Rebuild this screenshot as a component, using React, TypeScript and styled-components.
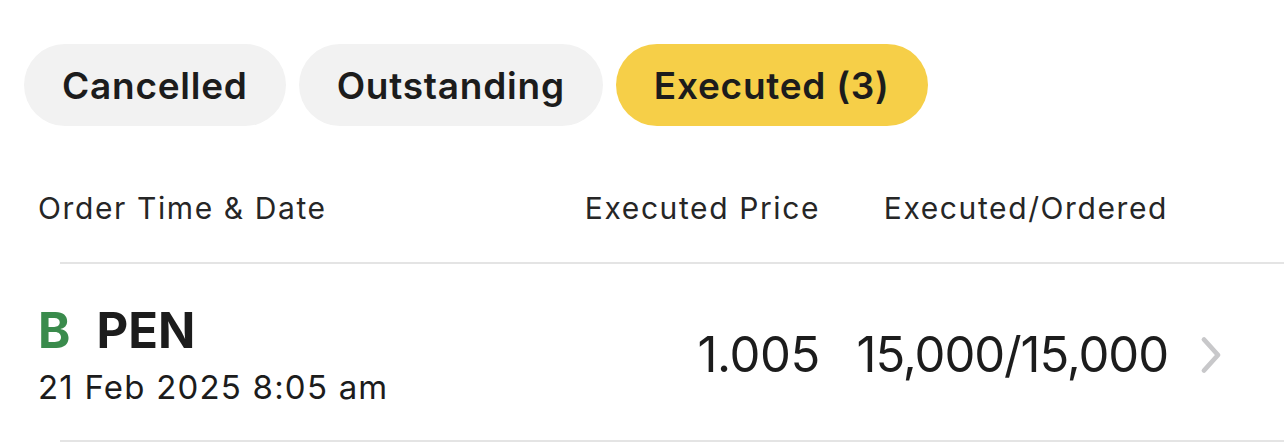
import React, { useState } from 'react';
import styled, { createGlobalStyle } from 'styled-components';

const GlobalStyle = createGlobalStyle`
  body {
    margin: 0;
    background: #ffffff;
    font-family: Inter, 'Noto Sans', sans-serif;
    color: #1c1c1c;
  }
`;

const orders = [
  {
    side: 'B',
    symbol: 'PEN',
    time: '21 Feb 2025 8:05 am',
    price: '1.005',
    filled: '15,000/15,000',
  },
];

const App = () => {
  const [tab, setTab] = useState('executed');

  return (
    <>
      <GlobalStyle />
      <Page>
        <Tabs>
          <Tab active={tab === 'cancelled'} onClick={() => setTab('cancelled')}>
            Cancelled
          </Tab>
          <Tab active={tab === 'outstanding'} onClick={() => setTab('outstanding')}>
            Outstanding
          </Tab>
          <Tab active={tab === 'executed'} onClick={() => setTab('executed')}>
            Executed (3)
          </Tab>
        </Tabs>

        <HeaderRow>
          <HeadLabel grow>Order Time &amp; Date</HeadLabel>
          <PriceCol>
            <HeadLabel>Executed Price</HeadLabel>
          </PriceCol>
          <QtyCol>
            <HeadLabel>Executed/Ordered</HeadLabel>
          </QtyCol>
          <ArrowCol />
        </HeaderRow>
        <Divider />

        {orders.map((order) => (
          <React.Fragment key={order.symbol + order.time}>
            <OrderRow>
              <OrderInfo>
                <SymbolLine>
                  <Side buy={order.side === 'B'}>{order.side}</Side>
                  <Symbol>{order.symbol}</Symbol>
                </SymbolLine>
                <OrderTime>{order.time}</OrderTime>
              </OrderInfo>
              <PriceCol>
                <Value>{order.price}</Value>
              </PriceCol>
              <QtyCol>
                <Value tight>{order.filled}</Value>
              </QtyCol>
              <ArrowCol>
                <svg width="24" height="40" viewBox="0 0 24 40" fill="none">
                  <path
                    d="M5 4.5 L19 20 L5 35.5"
                    stroke="#c8c8ca"
                    strokeWidth="4.8"
                    strokeLinecap="round"
                    strokeLinejoin="round"
                  />
                </svg>
              </ArrowCol>
            </OrderRow>
            <Divider />
          </React.Fragment>
        ))}
      </Page>
    </>
  );
};

export default App;

const Page = styled.div`
  width: 1284px;
  height: 442px;
  overflow: hidden;
`;

const Tabs = styled.div`
  display: flex;
  gap: 13px;
  padding: 44px 0 0 24px;
`;

const Tab = styled.button`
  height: 82px;
  padding: 0 38px;
  border: none;
  border-radius: 41px;
  background: ${(p) => (p.active ? '#f6cf48' : '#f2f2f2')};
  color: #1c1c1c;
  font-family: Inter, 'Noto Sans', sans-serif;
  font-size: 37px;
  font-weight: 600;
  letter-spacing: 0.75px;
  cursor: pointer;
`;

const HeaderRow = styled.div`
  display: flex;
  align-items: center;
  padding: 64px 0 36px 38px;
`;

const HeadLabel = styled.div`
  flex: ${(p) => (p.grow ? 1 : 'none')};
  font-size: 30px;
  line-height: 36px;
  letter-spacing: 1.6px;
  color: #262626;
  white-space: nowrap;
`;

const PriceCol = styled.div`
  width: 300px;
  display: flex;
  justify-content: flex-end;
`;

const QtyCol = styled.div`
  width: 348px;
  display: flex;
  justify-content: flex-end;
`;

const ArrowCol = styled.div`
  width: 116px;
  display: flex;
  align-items: center;
  padding-left: 31px;
  box-sizing: border-box;
`;

const Divider = styled.div`
  height: 2px;
  margin-left: 60px;
  background: #e4e4e4;
`;

const OrderRow = styled.div`
  display: flex;
  align-items: center;
  height: 176px;
  padding: 6px 0 0 38px;
  box-sizing: border-box;
`;

const OrderInfo = styled.div`
  flex: 1;
  display: flex;
  flex-direction: column;
  gap: 8px;
`;

const SymbolLine = styled.div`
  display: flex;
  align-items: baseline;
  gap: 26px;
  font-size: 49px;
  font-weight: 700;
  line-height: 56px;
`;

const Side = styled.span`
  color: ${(p) => (p.buy ? '#3a8b4c' : '#d13b3b')};
`;

const Symbol = styled.span`
  color: #1c1c1c;
`;

const OrderTime = styled.div`
  font-size: 33px;
  line-height: 40px;
  letter-spacing: 1.2px;
  color: #1c1c1c;
`;

const Value = styled.div`
  font-size: 49px;
  line-height: 56px;
  letter-spacing: ${(p) => (p.tight ? '-1.1px' : '-0.4px')};
  color: #1c1c1c;
  white-space: nowrap;
`;
